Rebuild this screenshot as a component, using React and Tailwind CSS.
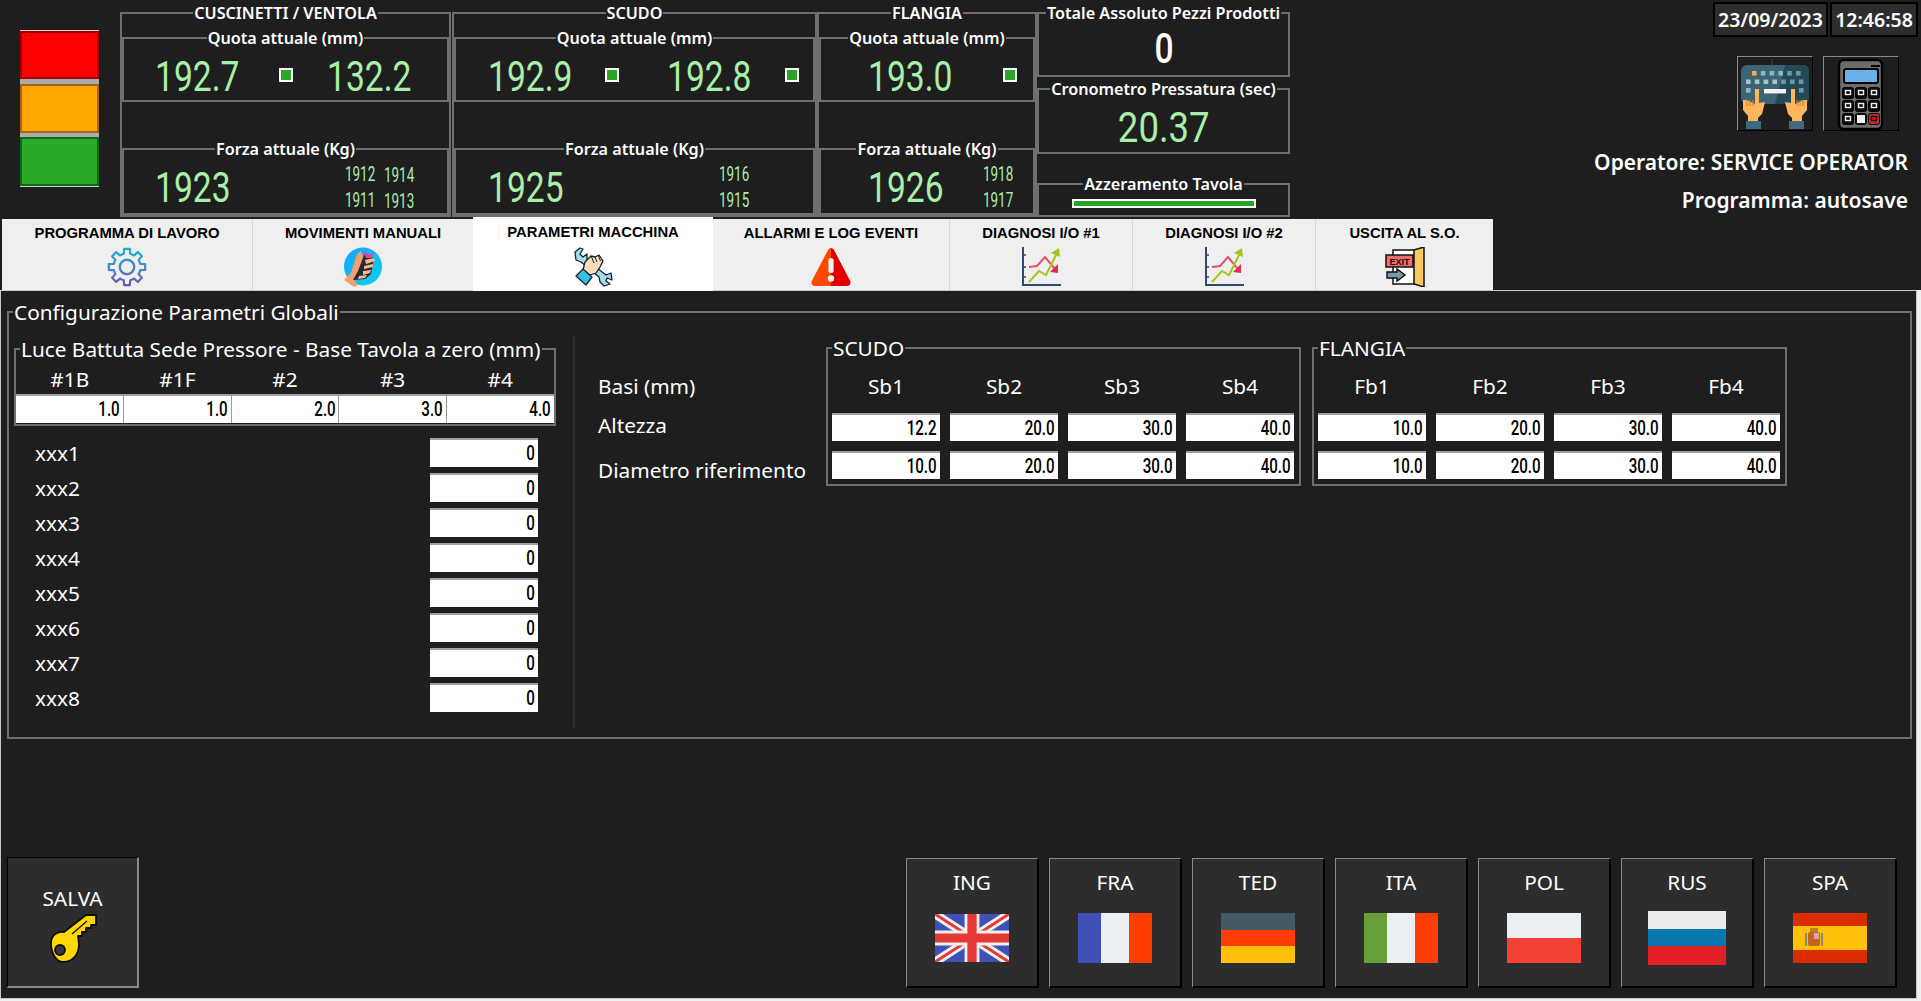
const gearPath = (() => {
  const pts = [];
  const n = 8;
  for (let i = 0; i < n; i++) {
    const a = (i / n) * Math.PI * 2 - Math.PI / 2;
    const step = (Math.PI * 2) / n;
    const list = [
      [13.6, -0.5 * step],
      [13.6, -0.3 * step],
      [18.4, -0.2 * step],
      [18.4, 0.2 * step],
      [13.6, 0.3 * step],
    ];
    list.forEach(([r, d]) => pts.push(`${(20 + r * Math.cos(a + d)).toFixed(2)},${(20 + r * Math.sin(a + d)).toFixed(2)}`));
  }
  return pts.join(" ");
})();

const Gear = () => (
  <svg width="40" height="40" viewBox="0 0 40 40" fill="none">
    <defs>
      <linearGradient id="gearG" x1="0" y1="0" x2="0" y2="40" gradientUnits="userSpaceOnUse">
        <stop offset="0" stopColor="#16b4d6" />
        <stop offset="0.55" stopColor="#4686c4" />
        <stop offset="1" stopColor="#7a4fa8" />
      </linearGradient>
    </defs>
    <polygon points={gearPath} stroke="url(#gearG)" strokeWidth="2.2" strokeLinejoin="round" />
    <circle cx="20" cy="20" r="7.2" stroke="url(#gearG)" strokeWidth="2.4" />
  </svg>
);

const JoyHand = () => (
  <svg width="40" height="40" viewBox="0 0 40 40">
    <defs>
      <linearGradient id="joyG" x1="0" y1="0" x2="1" y2="1">
        <stop offset="0" stopColor="#12a5ff" />
        <stop offset="1" stopColor="#0bd0ee" />
      </linearGradient>
    </defs>
    <ellipse cx="20" cy="19.5" rx="19" ry="19" fill="url(#joyG)" />
    <path d="M14 7 L18 4 L20 10 L17 25 L11 33 L15 38 L11 40 L1 33 L8 26 Z" fill="#f5a06c" />
    <path d="M21 8 L31 11 L28 27 L22 32 L10 33 L15 24 Z" fill="#2a2a33" />
    <path d="M20 4 L27 8 L31 5 L29 11 L23 11 Z" fill="#e8409a" />
    <path d="M22 13 L31 11 L32 14 L23 17 Z M21 19 L30 17 L30 20 L21 22 Z M20 24 L28 23 L27 26 L20 28 Z M16 29 L24 28 L22 31 L15 32 Z" fill="#f7b98c" />
  </svg>
);

const WrenchHand = () => (
  <svg width="40" height="40" viewBox="0 0 40 40">
    <path d="M2 5 L7 1 L10 2 L7 7 L10 10 L14 7 L14 13 L33 28 L38 26 L39 33 L34 31 L33 34 L37 37 L31 39 L27 35 L26 30 L8 15 L3 13 Z" fill="#a5dcec" stroke="#123" strokeWidth="1.3" strokeLinejoin="round" />
    <path d="M12 15 L18 9 L22 10 L26 8 L30 14 L27 20 L23 26 L17 28 L10 23 Z" fill="#fddcb6" stroke="#123" strokeWidth="1.3" strokeLinejoin="round" />
    <path d="M22 10 L24 15 M25.5 9 L27.5 14 M18.5 10 L21 16" stroke="#123" strokeWidth="1" />
    <path d="M3 29 L10 22 L19 30 L13 38 Z" fill="#33c2e0" stroke="#123" strokeWidth="1.3" strokeLinejoin="round" />
  </svg>
);

const Alarm = () => (
  <svg width="40" height="40" viewBox="0 0 40 40">
    <path d="M20 1 C18.5 1 17.5 2 17 3 L0.8 34 C-0.2 37 1.5 39 4 39 L20 39 Z" fill="#ff4800" />
    <path d="M20 1 C21.5 1 22.5 2 23 3 L39.2 34 C40.2 37 38.5 39 36 39 L20 39 Z" fill="#e00000" />
    <rect x="17.4" y="11" width="5.2" height="15" rx="2.6" fill="#f1f1f1" />
    <circle cx="20" cy="31.5" r="3.2" fill="#f1f1f1" />
  </svg>
);

const Chart = () => (
  <svg width="40" height="40" viewBox="0 0 40 40" fill="none">
    <path d="M2 0 V38 H40" stroke="#2f4a6c" strokeWidth="2" />
    <path d="M2 8 H5 M2 20 H5 M2 30 H5" stroke="#2f4a6c" strokeWidth="1.6" />
    <path d="M8 20 L16 19 L24 10 L34 22" stroke="#e8506a" strokeWidth="2" />
    <path d="M37 17 L37 26 L29 25 Z" fill="#e02e50" />
    <path d="M8 35 L18 24 L25 28 L36 6" stroke="#9ccb1c" strokeWidth="2" />
    <path d="M30 6 L38 1 L39 10 Z" fill="#9ccb1c" />
  </svg>
);

const ExitDoor = () => (
  <svg width="40" height="40" viewBox="0 0 40 40">
    <rect x="8" y="3" width="28" height="34" fill="#fff" stroke="#111" strokeWidth="1.5" />
    <path d="M29 3 L39 0 V40 L29 37 Z" fill="#fdc75f" stroke="#111" strokeWidth="1.5" />
    <rect x="1" y="8" width="27" height="12" fill="#f56a6a" stroke="#111" strokeWidth="1.5" />
    <text x="14.5" y="17.5" fontSize="9" fontWeight="700" textAnchor="middle" fill="#111" fontFamily="Liberation Sans, sans-serif">EXIT</text>
    <path d="M2 25 H12 V22 L20 28 L12 34 V31 H2 Z" fill="#7a9ab2" stroke="#111" strokeWidth="1.4" />
  </svg>
);

const KeyboardIcon = () => (
  <svg width="72" height="71" viewBox="0 0 72 71">
    <path d="M33 1 V8" stroke="#24424f" strokeWidth="1.5" />
    <rect x="2" y="7" width="68" height="39" rx="6" fill="#3c6474" />
    <path d="M46 7 H64 a6 6 0 0 1 6 6 V40 a6 6 0 0 1 -6 6 H36 Z" fill="#234a55" />
    {[0, 1, 2, 3, 4, 5].map((i) => (
      <rect key={i} x={13 + i * 8.8} y="13" width="4.6" height="4.6" fill={i === 0 ? "#f5a95e" : i > 3 ? "#6b9aa4" : "#8fb7c0"} />
    ))}
    {[0, 1, 2, 3, 4, 5, 6].map((i) => (
      <rect key={i} x={7 + i * 8.8} y="21.5" width="4.6" height="4.6" fill={i > 3 ? "#6b9aa4" : "#a3c6ce"} />
    ))}
    <rect x="7" y="30" width="4.6" height="4.6" fill="#8fb7c0" />
    <rect x="60" y="30" width="4.6" height="4.6" fill="#6b9aa4" />
    <rect x="25" y="31" width="22" height="4.4" fill="#f2f2f2" />
    <path d="M16 31 h4 V45 L26 44 L23 56 L19 60 V64 H9 V58 L4 52 V42 L8 42 L16 46 Z" fill="#ffb45e" />
    <path d="M56 31 h-4 V45 L46 44 L49 56 L53 60 V64 H63 V58 L68 52 V42 L64 42 L56 46 Z" fill="#ffb45e" />
    <path d="M8 42 v6 M11 42 v6 M14 42 v6 M64 42 v6 M61 42 v6 M58 42 v6" stroke="#d97f2b" strokeWidth="1.2" />
    <rect x="7" y="63" width="15" height="8" fill="#3f6a7c" />
    <rect x="50" y="63" width="15" height="8" fill="#3f6a7c" />
  </svg>
);

const CalcIcon = () => {
  const cols = [10, 23, 36];
  const rows = [33, 46, 59];
  return (
    <svg width="72" height="72" viewBox="0 0 72 72">
      <g transform="translate(13 0)">
        <rect x="1" y="2" width="43" height="69" rx="5" fill="#6c6c6c" stroke="#000" strokeWidth="2.4" />
        <rect x="33" y="7" width="9" height="2" fill="#000" />
        <rect x="6" y="11" width="34" height="14" rx="2" fill="#69b1ea" stroke="#000" strokeWidth="2" />
        {rows.map((y, r) =>
          cols.map((x, c) => {
            const red = r === 2 && c === 2;
            return (
              <g key={`${r}${c}`}>
                <rect x={x - 5.5} y={y - 3.5} width="11" height="11" rx="2" fill={red ? "#c8262a" : "#0a0a0a"} stroke="#000" strokeWidth="1" />
                {r === 2 && c === 1 ? (
                  <rect x={x - 4} y={y - 2} width="8" height="8" fill="#eee" />
                ) : (
                  <rect x={x - 2.5} y={y - 0.5} width="5" height="4" fill="none" stroke={red ? "#111" : "#eee"} strokeWidth="1.4" />
                )}
              </g>
            );
          })
        )}
      </g>
    </svg>
  );
};

const KeyIcon = () => (
  <svg width="50" height="50" viewBox="0 0 50 50">
    <path
      d="M3 30 C3 22 10 18 16 19 L38 2 L48 2 L48 12 L43 12 L43 15 L38 15 L38 19 L34 19 L34 23 L30 23 L31 31 C31 41 25 49 15 49 C8 49 3 40 3 30 Z"
      fill="#ffd800"
      stroke="#0c0c0c"
      strokeWidth="1.8"
      strokeLinejoin="round"
    />
    <circle cx="12" cy="37" r="5" fill="#3a3a3a" stroke="#0c0c0c" strokeWidth="1.8" />
    <path d="M24 21 L39 8" stroke="#0c0c0c" strokeWidth="1.2" />
  </svg>
);

const UkFlag = () => (
  <svg width="74" height="48" viewBox="0 0 60 39" preserveAspectRatio="none">
    <rect width="60" height="39" fill="#3f51b5" />
    <path d="M0 0 L60 39 M60 0 L0 39" stroke="#f0f0f0" strokeWidth="7" />
    <path d="M0 0 L60 39 M60 0 L0 39" stroke="#e53935" strokeWidth="2.4" />
    <path d="M30 0 V39 M0 19.5 H60" stroke="#f0f0f0" strokeWidth="12" />
    <path d="M30 0 V39 M0 19.5 H60" stroke="#e53935" strokeWidth="7.5" />
  </svg>
);

const Stripe3V = ({ a, b, c }) => (
  <div className="flex w-[74px] h-[50px]">
    <div className={`w-[23px] ${a}`} />
    <div className={`w-[28px] ${b}`} />
    <div className={`w-[23px] ${c}`} />
  </div>
);

const FrFlag = () => <Stripe3V a="bg-[#3f51b5]" b="bg-[#eceff1]" c="bg-[#ff3d00]" />;
const ItFlag = () => <Stripe3V a="bg-[#689f38]" b="bg-[#eceff1]" c="bg-[#ff3d00]" />;
const DeFlag = () => (
  <div className="flex flex-col w-[74px] h-[50px]">
    <div className="h-[17px] bg-[#455a64]" />
    <div className="h-[16px] bg-[#ff3d00]" />
    <div className="h-[17px] bg-[#ffc107]" />
  </div>
);
const PlFlag = () => (
  <div className="flex flex-col w-[74px] h-[50px]">
    <div className="h-[25px] bg-[#eceff1]" />
    <div className="h-[25px] bg-[#f44336]" />
  </div>
);
const RuFlag = () => (
  <div className="flex flex-col w-[78px] h-[54px]">
    <div className="h-[18px] bg-[#ebeced]" />
    <div className="h-[17px] bg-[#0977af]" />
    <div className="h-[19px] bg-[#e21f26]" />
  </div>
);
const EsFlag = () => (
  <svg width="74" height="50" viewBox="0 0 74 50">
    <rect width="74" height="50" fill="#dd2c00" />
    <rect y="13" width="74" height="24" fill="#ffc107" />
    <rect x="15" y="19" width="12" height="14" rx="2" fill="#c5651b" />
    <rect x="21" y="20" width="5" height="6" fill="#d8a8b0" />
    <rect x="17" y="15" width="8" height="4" fill="#b9801f" />
    <rect x="12" y="20" width="2" height="13" fill="#8a8a80" />
    <rect x="28" y="20" width="2" height="13" fill="#8a8a80" />
  </svg>
);

const Legend = ({ children, className = "" }) => (
  <legend className={`h-[20px] leading-[20px] px-[1px] whitespace-nowrap ${className}`}>{children}</legend>
);

const LCD = "font-['Roboto',sans-serif] inline-block whitespace-nowrap leading-none";

const Big = ({ children }) => (
  <span className={`${LCD} text-[42px] mt-[5px] text-[#a9efa9] origin-left scale-x-[0.8]`}>{children}</span>
);
const Small = ({ children }) => (
  <span className={`${LCD} text-[21px] text-[#a9efa9] origin-left scale-x-[0.64]`}>{children}</span>
);
const Led = () => <div className="w-[14px] h-[14px] mt-[2px] shrink-0 border-2 border-white bg-[#2aa52a]" />;

const HEAD = "font-['Noto_Sans',sans-serif] font-semibold text-[16.2px] text-white";
const BOX = "min-w-0 border-2 border-[#6f6f6f]";

const SmallPair = ({ a, b }) => (
  <div className="flex flex-col gap-[8px] mt-[6px]">
    {a.map((v, i) => (
      <div key={v} className="flex h-[18px] items-center">
        <div className="w-[39px]"><Small>{v}</Small></div>
        {b[i] && <Small>{b[i]}</Small>}
      </div>
    ))}
  </div>
);

const Gauge = ({ title, className, quota, forza }) => (
  <fieldset className={`${BOX} h-[214px] shrink-0 ${className}`}>
    <Legend className={`${HEAD} mx-auto`}>{title}</Legend>
    <fieldset className={`${BOX} h-[74px] mt-[5px]`}>
      <Legend className={`${HEAD} mx-auto`}>Quota attuale (mm)</Legend>
      <div className="flex items-center h-[52px]">{quota}</div>
    </fieldset>
    <fieldset className={`${BOX} h-[76px] mt-[37px]`}>
      <Legend className={`${HEAD} mx-auto`}>Forza attuale (Kg)</Legend>
      <div className="flex items-center h-[52px]">{forza}</div>
    </fieldset>
  </fieldset>
);

const tabs = [
  ["PROGRAMMA DI LAVORO", <Gear />, "w-[251px] border-r border-[#d6d6d6]"],
  ["MOVIMENTI MANUALI", <JoyHand />, "w-[220px]"],
  ["PARAMETRI MACCHINA", <WrenchHand />, "w-[240px]", true],
  ["ALLARMI E LOG EVENTI", <Alarm />, "w-[237px] border-r border-[#d6d6d6]"],
  ["DIAGNOSI I/O #1", <Chart />, "w-[183px] border-r border-[#d6d6d6]"],
  ["DIAGNOSI I/O #2", <Chart />, "w-[183px] border-r border-[#d6d6d6]"],
  ["USCITA AL S.O.", <ExitDoor />, "w-[177px]"],
];

const Tab = ({ label, icon, cls, active }) => (
  <div
    className={`flex flex-col items-center shrink-0 ${cls} ${
      active ? "bg-white h-[74px] -mt-[2px] pt-[6px] gap-[6px] relative z-10" : "bg-[#efefef] h-[71px] pt-[5px] gap-[5px]"
    }`}
  >
    <div className="h-[18px] leading-[18px] text-[14.8px] font-bold text-black font-['Liberation_Sans',sans-serif] whitespace-nowrap">{label}</div>
    {icon}
  </div>
);

const TXT = "font-['Noto_Sans',sans-serif] text-[20.8px] text-white";

const InputLcd = ({ children, className = "" }) => (
  <div className={`bg-white flex items-center justify-end border-t-2 border-[#a0a0a0] pr-[3px] overflow-hidden ${className}`}>
    <span className={`${LCD} text-[21px] font-medium text-black origin-right scale-x-[0.72]`}>{children}</span>
  </div>
);

const LuceGroup = () => (
  <fieldset className="min-w-0 border-2 border-[#6f6f6f] w-[542px] h-[89px] mt-[13px]">
    <legend className={`${TXT} h-[24px] leading-[24px] ml-[4px] px-[1px] whitespace-nowrap`}>Luce Battuta Sede Pressore - Base Tavola a zero (mm)</legend>
    <div className="grid grid-cols-5 h-[33px] items-center">
      {["#1B", "#1F", "#2", "#3", "#4"].map((h) => (
        <div key={h} className={`${TXT} text-center pt-[3px]`}>{h}</div>
      ))}
    </div>
    <div className="grid grid-cols-5 h-[29px] gap-x-[1px] bg-[#9a9a9a]">
      {["1.0", "1.0", "2.0", "3.0", "4.0"].map((v, i) => (
        <InputLcd key={i} className="h-[29px]">{v}</InputLcd>
      ))}
    </div>
  </fieldset>
);

const Bases = ({ title, prefix, top }) => (
  <fieldset className="min-w-0 border-2 border-[#6f6f6f] w-[475px] h-[150px] shrink-0">
    <legend className={`${TXT} h-[24px] leading-[24px] ml-[4px] px-[1px]`}>{title}</legend>
    <div className="grid grid-cols-[108px_108px_108px_108px] gap-x-[10px] pl-[4px]">
      {[1, 2, 3, 4].map((n) => (
        <div key={n} className={`${TXT} h-[53px] flex items-center justify-center`}>{prefix}{n}</div>
      ))}
      {top.map((v, i) => (
        <InputLcd key={i} className="h-[28px]">{v}</InputLcd>
      ))}
      {["10.0", "20.0", "30.0", "40.0"].map((v, i) => (
        <InputLcd key={i} className="h-[28px] mt-[10px]">{v}</InputLcd>
      ))}
    </div>
  </fieldset>
);

const LangBtn = ({ label, flag }) => (
  <div className="w-[133px] h-[130px] shrink-0 bg-[#2d2d2d] border-t border-l border-[#8a8a8a] border-r-2 border-b-2 border-r-black border-b-black flex flex-col items-center">
    <div className={`${TXT} h-[26px] leading-[26px] mt-[10px]`}>{label}</div>
    <div className="h-[68px] flex items-center justify-center mt-[9px]">{flag}</div>
  </div>
);

export default function App() {
  return (
    <div className="w-[1921px] h-[1001px] bg-[#1e1e1e] overflow-hidden flex flex-col">
      {/* header */}
      <div className="flex items-start h-[217px] shrink-0">
        <div className="ml-[20px] mt-[30px] w-[79px] shrink-0 flex flex-col bg-[#ababab] border-y border-[#cfcfcf]">
          <div className="h-[48px] bg-[#ff0000] border-2 border-[#a30000]" />
          <div className="h-[49px] mt-[5px] bg-[#ffa500] border-2 border-[#a5651c]" />
          <div className="h-[49px] mt-[4px] bg-[#2aa92a] border-2 border-[#0b6a12]" />
        </div>

        <div className="flex ml-[21px] mt-[3px] shrink-0">
          <Gauge
            title="CUSCINETTI / VENTOLA"
            className="w-[331px] mr-[1px]"
            quota={
              <>
                <div className="w-[155px] pl-[31px] shrink-0"><Big>192.7</Big></div>
                <Led />
                <div className="ml-[34px]"><Big>132.2</Big></div>
              </>
            }
            forza={
              <>
                <div className="w-[221px] pl-[31px] shrink-0"><Big>1923</Big></div>
                <SmallPair a={["1912", "1911"]} b={["1914", "1913"]} />
              </>
            }
          />
          <Gauge
            title="SCUDO"
            className="w-[365px]"
            quota={
              <>
                <div className="w-[149px] pl-[32px] shrink-0"><Big>192.9</Big></div>
                <Led />
                <div className="w-[166px] pl-[48px] shrink-0"><Big>192.8</Big></div>
                <Led />
              </>
            }
            forza={
              <>
                <div className="w-[263px] pl-[32px] shrink-0"><Big>1925</Big></div>
                <SmallPair a={["1916", "1915"]} b={[]} />
              </>
            }
          />
          <Gauge
            title="FLANGIA"
            className="w-[220px]"
            quota={
              <>
                <div className="w-[182px] pl-[47px] shrink-0"><Big>193.0</Big></div>
                <Led />
              </>
            }
            forza={
              <>
                <div className="w-[162px] pl-[47px] shrink-0"><Big>1926</Big></div>
                <SmallPair a={["1918", "1917"]} b={[]} />
              </>
            }
          />
        </div>

        <div className="w-[253px] shrink-0 mt-[3px] flex flex-col">
          <fieldset className={`${BOX} h-[74px]`}>
            <Legend className={`${HEAD} mx-auto`}>Totale Assoluto Pezzi Prodotti</Legend>
            <div className="flex justify-center pt-[5px]">
              <span className={`${LCD} text-[42px] font-medium text-white scale-x-[0.8]`}>0</span>
            </div>
          </fieldset>
          <fieldset className={`${BOX} h-[75px] mt-[2px]`}>
            <Legend className={`${HEAD} mx-auto`}>Cronometro Pressatura (sec)</Legend>
            <div className="flex justify-center pt-[8px]">
              <span className={`${LCD} text-[42px] text-[#a9efa9] scale-x-[0.87]`}>20.37</span>
            </div>
          </fieldset>
          <fieldset className={`${BOX} h-[43px] mt-[20px]`}>
            <Legend className={`${HEAD} mx-auto`}>Azzeramento Tavola</Legend>
            <div className="mx-auto w-[184px] h-[9px] mt-[5px] border-2 border-white bg-[#2aa52a]" />
          </fieldset>
        </div>

        <div className="flex-1 flex flex-col items-end pr-[3px] pt-[2px]">
          <div className="flex gap-[2px]">
            <div className="w-[115px] h-[35px] bg-[#2d2d2d] border-2 border-black font-['Noto_Sans',sans-serif] font-semibold text-[19.5px] text-white flex items-center justify-center">23/09/2023</div>
            <div className="w-[88px] h-[35px] bg-[#2d2d2d] border-2 border-black font-['Noto_Sans',sans-serif] font-semibold text-[19.5px] text-white flex items-center justify-center">12:46:58</div>
          </div>
          <div className="flex gap-[10px] mt-[19px] mr-[19px]">
            <div className="w-[76px] h-[75px] bg-[#1e1e1e] border border-[#8a8a8a] border-r-black border-b-black flex items-center justify-center"><KeyboardIcon /></div>
            <div className="w-[76px] h-[75px] bg-[#1e1e1e] border border-[#8a8a8a] border-r-black border-b-black flex items-center justify-center"><CalcIcon /></div>
          </div>
          <div className="mt-[17px] mr-[10px] h-[28px] leading-[28px] font-['Noto_Sans',sans-serif] font-semibold text-[21px] text-white whitespace-nowrap">Operatore: SERVICE OPERATOR</div>
          <div className="mt-[10px] mr-[10px] h-[28px] leading-[28px] font-['Noto_Sans',sans-serif] font-semibold text-[21px] text-white whitespace-nowrap">Programma: autosave</div>
        </div>
      </div>

      {/* tabs */}
      <div className="flex h-[73px] shrink-0 pl-[2px] pt-[2px]">
        {tabs.map(([l, ic, c, a]) => (
          <Tab key={l} label={l} icon={ic} cls={c} active={a} />
        ))}
      </div>

      {/* main */}
      <div className="bg-[#efefef] flex-1 min-h-0">
        <div className="w-[1917px] h-[709px] bg-[#1e1e1e] border-t border-l border-b border-r border-[#c8c8c8]">
          <fieldset className="min-w-0 ml-[6px] mt-[9px] w-[1905px] h-[439px] border-2 border-[#6f6f6f]">
            <legend className={`${TXT} h-[24px] leading-[24px] ml-[4px] px-[1px] whitespace-nowrap`}>Configurazione Parametri Globali</legend>
            <div className="flex items-start">
              <div className="w-[564px] shrink-0 pl-[5px]">
                <LuceGroup />
                <div className="flex flex-col gap-[6px] mt-[12px]">
                  {[1, 2, 3, 4, 5, 6, 7, 8].map((n) => (
                    <div key={n} className="flex items-center h-[29px]">
                      <div className={`${TXT} w-[416px] pl-[21px] pt-[2px]`}>xxx{n}</div>
                      <InputLcd className="w-[108px] h-[29px]">0</InputLcd>
                    </div>
                  ))}
                </div>
              </div>
              <div className="w-[2px] h-[390px] bg-[#2f2f2f] mt-[13px] shrink-0" />
              <div className="w-[251px] shrink-0 pl-[23px] pt-[12px] mt-[14px]">
                <div className={`${TXT} h-[28px] leading-[28px] mt-[22px]`}>Basi (mm)</div>
                <div className={`${TXT} h-[28px] leading-[28px] mt-[11px]`}>Altezza</div>
                <div className={`${TXT} h-[28px] leading-[28px] mt-[17px] whitespace-nowrap`}>Diametro riferimento</div>
              </div>
              <div className="flex gap-[11px] mt-[12px]">
                <Bases title="SCUDO" prefix="Sb" top={["12.2", "20.0", "30.0", "40.0"]} />
                <Bases title="FLANGIA" prefix="Fb" top={["10.0", "20.0", "30.0", "40.0"]} />
              </div>
            </div>
          </fieldset>

          <div className="flex mt-[118px] items-start">
            <div className="ml-[6px] w-[132px] h-[131px] shrink-0 bg-[#2d2d2d] border-t border-l border-black border-r-2 border-b-2 border-r-[#8a8a8a] border-b-[#8a8a8a] flex flex-col items-center">
              <div className={`${TXT} h-[26px] leading-[26px] mt-[27px]`}>SALVA</div>
              <div className="mt-[2px]"><KeyIcon /></div>
            </div>
            <div className="flex gap-[10px] ml-[767px] mt-[1px]">
              <LangBtn label="ING" flag={<UkFlag />} />
              <LangBtn label="FRA" flag={<FrFlag />} />
              <LangBtn label="TED" flag={<DeFlag />} />
              <LangBtn label="ITA" flag={<ItFlag />} />
              <LangBtn label="POL" flag={<PlFlag />} />
              <LangBtn label="RUS" flag={<RuFlag />} />
              <LangBtn label="SPA" flag={<EsFlag />} />
            </div>
          </div>
        </div>
      </div>
    </div>
  );
}
